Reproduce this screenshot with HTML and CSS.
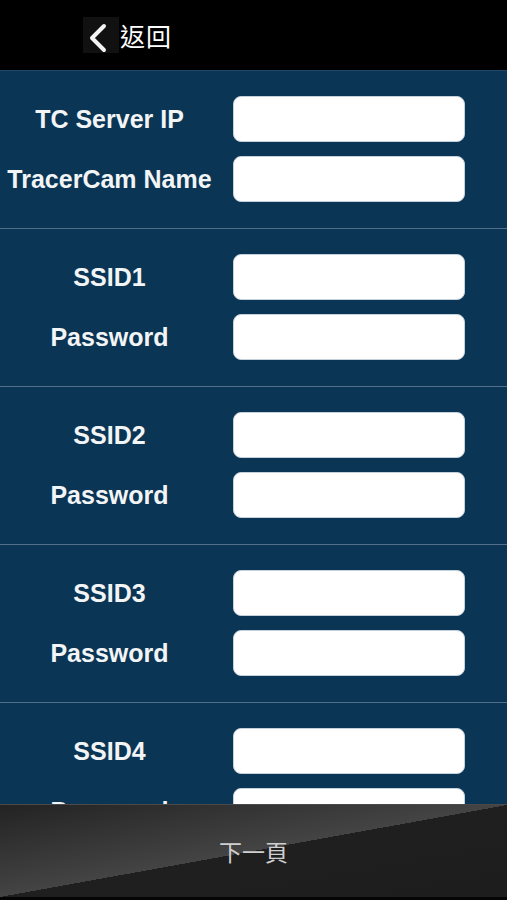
FILE: index.html
```html
<!DOCTYPE html>
<html lang="zh-Hant">
<head>
<meta charset="utf-8">
<link rel="stylesheet" href="styles.css">
</head>
<body>
<header class="topbar">
  <button class="back">
    <span class="chev"><svg width="36" height="36" viewBox="0 0 36 36"><path d="M21 9 L9 21 L21 33" fill="none" stroke="#f4f4f4" stroke-width="4" stroke-linecap="round" stroke-linejoin="round"/></svg></span>
    <span class="back-text">返回</span>
  </button>
</header>
<main class="form">
  <section class="group">
    <div class="row"><label>TC Server IP</label><input class="field" type="text"></div>
    <div class="row"><label>TracerCam Name</label><input class="field" type="text"></div>
  </section>
  <section class="group">
    <div class="row"><label>SSID1</label><input class="field" type="text"></div>
    <div class="row"><label>Password</label><input class="field" type="text"></div>
  </section>
  <section class="group">
    <div class="row"><label>SSID2</label><input class="field" type="text"></div>
    <div class="row"><label>Password</label><input class="field" type="text"></div>
  </section>
  <section class="group">
    <div class="row"><label>SSID3</label><input class="field" type="text"></div>
    <div class="row"><label>Password</label><input class="field" type="text"></div>
  </section>
  <section class="group">
    <div class="row"><label>SSID4</label><input class="field" type="text"></div>
    <div class="row"><label>Password</label><input class="field" type="text"></div>
  </section>
</main>
<footer class="next">下一頁</footer>
</body>
</html>
```
FILE: styles.css
```css
html, body {
  margin: 0;
  padding: 0;
  height: 900px;
  overflow: hidden;
  background: #0a3554;
  font-family: "Liberation Sans", Arial, "Noto Sans CJK TC", sans-serif;
}
.topbar {
  height: 70px;
  background: #000;
  border-bottom: 1px solid #1d4765;
  display: flex;
  align-items: center;
  padding-left: 83px;
  box-sizing: content-box;
}
.back {
  display: flex;
  align-items: center;
  background: none;
  border: none;
  padding: 0;
  color: #fff;
  font-family: "Noto Sans CJK TC", sans-serif;
}
.chev {
  width: 36px;
  height: 36px;
  background: #111;
  display: flex;
  align-items: center;
  justify-content: center;
}
.back-text {
  font-size: 25px;
  line-height: 36px;
  margin-left: 1px;
  letter-spacing: 1px;
}
.form {
  display: flex;
  flex-direction: column;
}
.group {
  display: flex;
  flex-direction: column;
  gap: 14px;
  padding: 25px 0 26px;
  border-bottom: 1px solid #52708b;
}
.row {
  display: flex;
  align-items: center;
  height: 46px;
}
.row label {
  width: 219px;
  text-align: center;
  color: #f2f4f6;
  font-weight: bold;
  font-size: 25px;
  white-space: nowrap;
}
.field {
  margin-left: 14px;
  width: 232px;
  height: 46px;
  box-sizing: border-box;
  border: 1px solid #c4d0da;
  border-radius: 8px;
  background: #fff;
  outline: none;
}
.next {
  position: fixed;
  left: 0;
  right: 0;
  bottom: 0;
  height: 92px;
  border-top: 1px solid #4a4a4a;
  border-bottom: 3px solid #050505;
  background: linear-gradient(to bottom right, #232323 0%, #444 50%, #1f1f1f 50%, #1d1d1d 100%);
  color: #cfcfcf;
  font-family: "Noto Sans CJK TC", sans-serif;
  font-size: 23px;
  display: flex;
  align-items: center;
  justify-content: center;
}
```
